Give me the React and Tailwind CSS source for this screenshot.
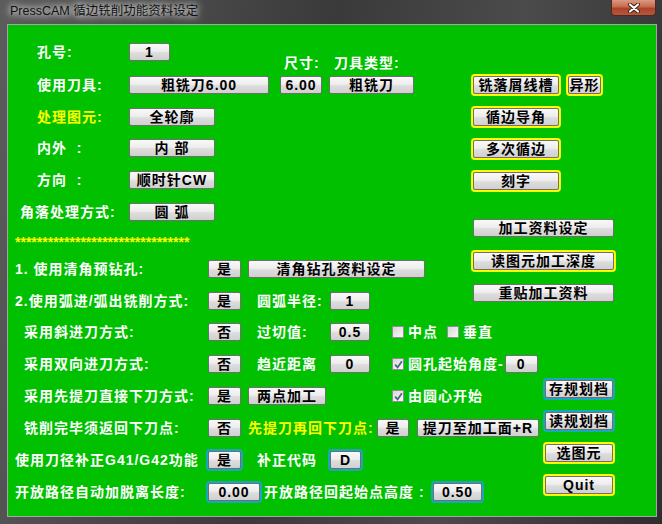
import React from "react";
import clsx from "clsx";

const BTN_BG = "bg-[linear-gradient(#f8f8f8,#eeeeee_45%,#dddddd_55%,#d0d0d0)]";
const TXT = "text-[14px] font-bold tracking-[1px] leading-[18px] whitespace-pre";

function Btn({ w, ring, className, children }) {
  return (
    <div
      className={clsx(
        "flex h-[18px] shrink-0 items-center justify-center rounded-[2px] border border-[#6f6f6f] text-black",
        TXT,
        BTN_BG,
        w,
        ring === "y" && "outline-2 outline-[#ffff00]",
        ring === "c" && "outline-2 outline-[#1aa7bd]",
        className
      )}
    >
      {children}
    </div>
  );
}

function Check({ checked, className, children }) {
  return (
    <div className={clsx("flex shrink-0 items-center", className)}>
      <div className="flex h-[12px] w-[12px] items-center justify-center border border-[#8e8f8f] bg-[linear-gradient(135deg,#d6d6d6,#f9f9f9)]">
        {checked && (
          <svg width="9" height="9" viewBox="0 0 9 9">
            <path d="M1.2 4.6 L3.6 7.4 L7.9 1.2" stroke="#4b6189" strokeWidth="1.7" fill="none" />
          </svg>
        )}
      </div>
      <span className={clsx("ml-[4px] text-white", TXT)}>{children}</span>
    </div>
  );
}

export default function App() {
  return (
    <div className="h-[524px] w-[662px] overflow-hidden bg-[linear-gradient(100deg,#5c5c5c,#3a3a3a_45%,#4b4b4b_70%,#2e2e2e)] font-['Liberation_Sans','Noto_Sans_CJK_SC',sans-serif]">
      {/* title bar */}
      <div className="flex h-[24px] justify-between">
        <span className="ml-[10px] mt-[3px] text-[12.5px] leading-[16px] text-[#111] [text-shadow:0_0_6px_#fff,0_0_10px_#ddd]">
          PressCAM 循边铣削功能资料设定
        </span>
        <div className="mr-[6px] flex h-[16px] w-[45px] items-center justify-center rounded-b-[4px] border border-t-0 border-[#4a2b22] bg-[linear-gradient(#d99a83,#c96a4b_45%,#a9442a_55%,#b9563a)]">
          <svg width="14" height="10" viewBox="0 0 14 10">
            <path d="M3 1.5 L11 8.5 M11 1.5 L3 8.5" stroke="#3a1d14" strokeWidth="4" strokeLinecap="round" />
            <path d="M3 1.5 L11 8.5 M11 1.5 L3 8.5" stroke="#ffffff" strokeWidth="2.2" strokeLinecap="round" />
          </svg>
        </div>
      </div>

      {/* green panel */}
      <div className="ml-[7px] h-[493px] w-[650px] border border-[#a5a5a5] bg-[#00c000]">
        {/* upper part */}
        <div className="flex">
          <div className="w-[465px] pl-[7px]">
            <div className="mt-[18px] flex h-[18px] items-center">
              <span className={clsx("w-[114px] pl-[22px] text-white", TXT)}>孔号:</span>
              <Btn w="w-[41px]">1</Btn>
            </div>
            <div className="mt-[15px] flex h-[18px] items-end">
              <span className={clsx("w-[114px] self-center pl-[22px] text-white", TXT)}>使用刀具:</span>
              <Btn w="w-[140px]">粗铣刀6.00</Btn>
              <div className="ml-[11px] flex flex-col">
                <span className={clsx("mb-[4px] pl-[4px] text-white", TXT)}>尺寸:</span>
                <Btn w="w-[42px]">6.00</Btn>
              </div>
              <div className="ml-[7px] flex flex-col">
                <span className={clsx("mb-[4px] pl-[5px] text-white", TXT)}>刀具类型:</span>
                <Btn w="w-[85px]">粗铣刀</Btn>
              </div>
            </div>
            <div className="mt-[14px] flex h-[18px] items-center">
              <span className={clsx("w-[114px] pl-[22px] text-[#ffff00]", TXT)}>处理图元:</span>
              <Btn w="w-[86px]">全轮廓</Btn>
            </div>
            <div className="mt-[13px] flex h-[18px] items-center">
              <span className={clsx("w-[114px] pl-[22px] text-white", TXT)}>内外  :</span>
              <Btn w="w-[86px]">内 部</Btn>
            </div>
            <div className="mt-[14px] flex h-[18px] items-center">
              <span className={clsx("w-[114px] pl-[22px] text-white", TXT)}>方向  :</span>
              <Btn w="w-[86px]">顺时针CW</Btn>
            </div>
            <div className="mt-[14px] flex h-[18px] items-center">
              <span className={clsx("w-[114px] pl-[5px] text-white", TXT)}>角落处理方式:</span>
              <Btn w="w-[86px]">圆 弧</Btn>
            </div>
            <div className="mt-[13px] h-[16px] text-[14px] font-bold leading-[16px] text-[#ffff00]">
              ********************************
            </div>
            <div className="mt-[10px] flex h-[18px] items-center">
              <span className={clsx("w-[193px] text-white", TXT)}>1. 使用清角预钻孔:</span>
              <Btn w="w-[33px]">是</Btn>
              <Btn w="w-[177px]" className="ml-[7px]">清角钻孔资料设定</Btn>
            </div>
            <div className="mt-[14px] flex h-[18px] items-center">
              <span className={clsx("w-[193px] text-white", TXT)}>2.使用弧进/弧出铣削方式:</span>
              <Btn w="w-[33px]">是</Btn>
              <span className={clsx("ml-[16px] w-[73px] text-white", TXT)}>圆弧半径:</span>
              <Btn w="w-[40px]">1</Btn>
            </div>
          </div>

          <div className="mt-[51px] flex flex-col">
            <div className="flex">
              <Btn w="w-[86px]" ring="y">铣落屑线槽</Btn>
              <Btn w="w-[33px]" ring="y" className="ml-[9px]">异形</Btn>
            </div>
            <Btn w="w-[86px]" ring="y" className="mt-[14px]">循边导角</Btn>
            <Btn w="w-[86px]" ring="y" className="mt-[14px]">多次循边</Btn>
            <Btn w="w-[86px]" ring="y" className="mt-[14px]">刻字</Btn>
            <Btn w="w-[141px]" className="mt-[29px]">加工资料设定</Btn>
            <Btn w="w-[141px]" ring="y" className="mt-[15px]">读图元加工深度</Btn>
            <Btn w="w-[141px]" className="mt-[14px]">重贴加工资料</Btn>
          </div>
        </div>

        {/* lower part */}
        <div className="flex">
          <div className="w-[537px] pl-[7px]">
            <div className="mt-[13px] flex h-[18px] items-center">
              <span className={clsx("w-[193px] pl-[9px] text-white", TXT)}>采用斜进刀方式:</span>
              <Btn w="w-[33px]">否</Btn>
              <span className={clsx("ml-[16px] w-[73px] text-white", TXT)}>过切值:</span>
              <Btn w="w-[40px]">0.5</Btn>
              <Check className="ml-[22px]">中点</Check>
              <Check className="ml-[9px]">垂直</Check>
            </div>
            <div className="mt-[14px] flex h-[18px] items-center">
              <span className={clsx("w-[193px] pl-[9px] text-white", TXT)}>采用双向进刀方式:</span>
              <Btn w="w-[33px]">否</Btn>
              <span className={clsx("ml-[16px] w-[73px] text-white", TXT)}>趋近距离</span>
              <Btn w="w-[40px]">0</Btn>
              <Check checked className="ml-[22px]">圆孔起始角度-</Check>
              <Btn w="w-[33px]" className="ml-[1px]">0</Btn>
            </div>
            <div className="mt-[14px] flex h-[18px] items-center">
              <span className={clsx("w-[193px] pl-[9px] text-white", TXT)}>采用先提刀直接下刀方式:</span>
              <Btn w="w-[33px]">是</Btn>
              <Btn w="w-[78px]" className="ml-[7px]">两点加工</Btn>
              <Check checked className="ml-[66px]">由圆心开始</Check>
            </div>
            <div className="mt-[14px] flex h-[18px] items-center">
              <span className={clsx("w-[193px] pl-[9px] text-white", TXT)}>铣削完毕须返回下刀点:</span>
              <Btn w="w-[33px]">否</Btn>
              <span className={clsx("ml-[7px] w-[129px] text-[#ffff00]", TXT)}>先提刀再回下刀点:</span>
              <Btn w="w-[32px]">是</Btn>
              <Btn w="w-[122px]" className="ml-[8px]">提刀至加工面+R</Btn>
            </div>
            <div className="mt-[14px] flex h-[18px] items-center">
              <span className={clsx("w-[193px] text-white", TXT)}>使用刀径补正G41/G42功能</span>
              <Btn w="w-[33px]" ring="c">是</Btn>
              <span className={clsx("ml-[16px] w-[73px] text-white", TXT)}>补正代码</span>
              <Btn w="w-[31px]" ring="c">D</Btn>
            </div>
            <div className="mt-[14px] flex h-[18px] items-center">
              <span className={clsx("w-[193px] text-white", TXT)}>开放路径自动加脱离长度:</span>
              <Btn w="w-[52px]" ring="c">0.00</Btn>
              <span className={clsx("ml-[4px] w-[169px] text-white", TXT)}>开放路径回起始点高度 :</span>
              <Btn w="w-[49px]" ring="c">0.50</Btn>
            </div>
          </div>

          <div className="mt-[70px] flex flex-col">
            <Btn w="w-[68px]" ring="c">存规划档</Btn>
            <Btn w="w-[68px]" ring="c" className="mt-[14px]">读规划档</Btn>
            <Btn w="w-[68px]" ring="y" className="mt-[14px]">选图元</Btn>
            <Btn w="w-[68px]" ring="y" className="mt-[14px]">Quit</Btn>
          </div>
        </div>
      </div>
    </div>
  );
}
